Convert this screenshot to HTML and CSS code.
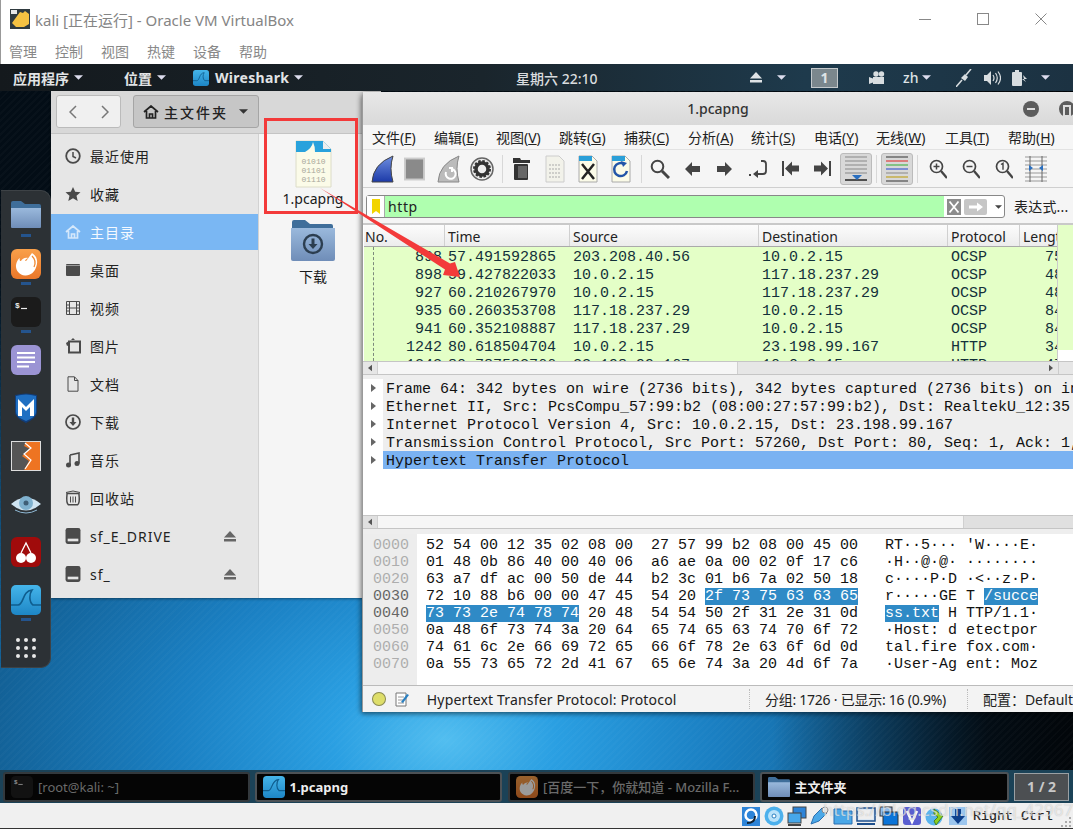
FILE: index.html
```html
<!DOCTYPE html>
<html lang="zh">
<head>
<meta charset="utf-8">
<title>kali [正在运行] - Oracle VM VirtualBox</title>
<link rel="stylesheet" href="styles.css">
</head>
<body>
<svg class="defs" width="0" height="0">
  <defs>
    <linearGradient id="gFolder" x1="0" y1="0" x2="0" y2="1"><stop offset="0" stop-color="#9ab9dc"/><stop offset="1" stop-color="#6f8db8"/></linearGradient>
    <linearGradient id="gShark" x1="0" y1="0" x2="0" y2="1"><stop offset="0" stop-color="#45b5ea"/><stop offset="1" stop-color="#1d86c6"/></linearGradient>
    <linearGradient id="gFox" x1="0" y1="0" x2="0" y2="1"><stop offset="0" stop-color="#f9a04a"/><stop offset="1" stop-color="#e9772a"/></linearGradient>
    <linearGradient id="gFin" x1="0" y1="0" x2="0" y2="1"><stop offset="0" stop-color="#6f8fe0"/><stop offset="1" stop-color="#1c3aa8"/></linearGradient>
    <symbol id="folder" viewBox="0 0 30 27"><path d="M0 2q0-2 2-2h8l4 3h14q2 0 2 2v5H0z" fill="#3f6e9a"/><path d="M0 7h30v19q0 1-1 1H1q-1 0-1-1z" fill="url(#gFolder)"/></symbol>
    <symbol id="shark" viewBox="0 0 30 30"><rect width="30" height="30" rx="5" fill="url(#gShark)"/><path d="M0 20h7c6 0 4-14 14-15-3 4-3 12 1 15h8" fill="none" stroke="#0f5d8e" stroke-width="1.6"/></symbol>
    <symbol id="fox" viewBox="0 0 30 30"><rect width="30" height="30" rx="6" fill="url(#gFox)"/><path d="M21 4c5 3 6 8 4.500 13C24 23 19 27 14 26.500 8 26 4.500 21 5 16c.5-3 2-6 4-7-1 2 0 3 1 3 1-2 4-4 7-3-2 1-3 2-3 3 3-1 7 1 7 5 0 5-6 7-9 4 3 .5 6-1 6-3 0-3-3-3-5-3" fill="#fff"/><path d="M21 7c3 3 4 7 2 11" fill="none" stroke="#f08a32" stroke-width="1.300"/></symbol>
    <symbol id="term" viewBox="0 0 30 30"><rect width="30" height="30" rx="6" fill="#1b1b1b"/><text x="4" y="11" font-family="Liberation Mono" font-weight="700" font-size="8" fill="#eee">$</text><path d="M10 11.500h6" stroke="#eee" stroke-width="1.200"/></symbol>
    <symbol id="eject" viewBox="0 0 12 11"><path d="M6 0l6 6.500H0z" fill="currentColor"/><rect y="8" width="12" height="2.500" fill="currentColor"/></symbol>
    <symbol id="tri" viewBox="0 0 10 5"><path d="M0 0h10L5 5z" fill="currentColor"/></symbol>
    <symbol id="home" viewBox="0 0 16 14"><path d="M1 7l7-6 7 6M3.500 6v7h9V6M6.500 13V9h3v4" fill="none" stroke="currentColor" stroke-width="1.700"/></symbol>
    <symbol id="disk" viewBox="0 0 14 15"><rect width="14" height="15" rx="2" fill="#4b4b4b"/><rect x="2" y="10" width="10" height="2.500" fill="#e6e6e6"/></symbol>
    <symbol id="down" viewBox="0 0 16 16"><circle cx="8" cy="8" r="7" fill="none" stroke="currentColor" stroke-width="1.700"/><path d="M6.800 3.500h2.400V8h2.300L8 12 4.500 8h2.300z" fill="currentColor"/></symbol>
  </defs>
</svg>

<div class="host">
  <header class="host-title">
    <svg class="vbox-logo" viewBox="0 0 20 20"><rect width="20" height="20" fill="#2f3a3f"/><path d="M2 14L10 3l3 1 2-2 4 3v10l-5 3H6z" fill="#f5c242"/><rect x="1" y="1" width="6" height="4" fill="#e8e8e8"/></svg>
    <span class="host-name">kali [正在运行] - Oracle VM VirtualBox</span>
    <div class="win-ctrls">
      <svg viewBox="0 0 12 12"><path d="M0 6.500h12" stroke="#888"/></svg>
      <svg viewBox="0 0 12 12"><rect x=".5" y=".5" width="11" height="11" fill="none" stroke="#888"/></svg>
      <svg viewBox="0 0 12 12"><path d="M.5.500l11 11M11.500.500l-11 11" stroke="#888"/></svg>
    </div>
  </header>
  <nav class="host-menu"><span>管理</span><span>控制</span><span>视图</span><span>热键</span><span>设备</span><span>帮助</span></nav>

  <main class="guest">
    <div class="panel">
      <div class="panel-left">
        <span class="pitem">应用程序<svg class="tri"><use href="#tri"/></svg></span>
        <span class="pitem">位置<svg class="tri"><use href="#tri"/></svg></span>
        <span class="pitem wsitem"><svg class="pico"><use href="#shark"/></svg>Wireshark<svg class="tri"><use href="#tri"/></svg></span>
      </div>
      <div class="clock">星期六 22:10</div>
      <div class="panel-right">
        <svg class="pe"><use href="#eject"/></svg>
        <svg class="tri t1"><use href="#tri"/></svg>
        <span class="wsnum">1</span>
        <svg class="cam" viewBox="0 0 16 14"><path d="M0 6l4 1.500V6h11v7H4v-1.500L0 13z" fill="#d8dde0"/><circle cx="7" cy="3" r="2.700" fill="#d8dde0"/><circle cx="12.500" cy="3" r="2.700" fill="#d8dde0"/></svg>
        <span class="zh">zh</span>
        <svg class="tri t2"><use href="#tri"/></svg>
        <svg class="plug" viewBox="0 0 16 18"><path d="M0 18l6-7" stroke="#d8dde0" stroke-width="1.500"/><path d="M5 9l4 3 3-4-3-3z" fill="#d8dde0"/><path d="M10 6l5-6" stroke="#d8dde0" stroke-width="1.500"/></svg>
        <svg class="vol" viewBox="0 0 17 14"><path d="M0 4h3l4-4v14l-4-4H0z" fill="#d8dde0"/><path d="M9 4q2 3 0 6M11.500 2q3.500 5 0 10M14 .5q5 6.500 0 13" stroke="#d8dde0" fill="none" stroke-width="1.200"/></svg>
        <svg class="batt" viewBox="0 0 16 16"><rect x="0" y="2" width="10" height="14" rx="1" fill="#d8dde0"/><rect x="3" y="0" width="4" height="2" fill="#d8dde0"/><path d="M11 5l4 4h-3l2 3-4-3h2z" fill="#d8dde0"/></svg>
        <svg class="tri t3"><use href="#tri"/></svg>
      </div>
    </div>

    <div class="desktop">
      <aside class="dock">
        <div class="dock-item"><svg class="dico"><use href="#folder"/></svg><i class="run"></i></div>
        <div class="dock-item"><svg class="dico"><use href="#fox"/></svg><i class="run"></i></div>
        <div class="dock-item"><svg class="dico"><use href="#term"/></svg><i class="run"></i></div>
        <div class="dock-item"><svg class="dico" viewBox="0 0 30 30"><rect width="30" height="30" rx="6" fill="#9b94d4"/><path d="M6 8h18M6 12.500h18M6 17h18M6 21.500h12" stroke="#fff" stroke-width="2"/></svg><i class="run off"></i></div>
        <div class="dock-item"><svg class="dico" viewBox="0 0 30 30"><path d="M4 2q11-3 22 0v17q0 6-11 11Q4 25 4 19z" fill="#123d78"/><path d="M5 3q10-3 20 0v16q0 5-10 9Q5 24 5 19z" fill="#1f6fc2"/><path d="M7 23V6l8 8 8-8v17h-4v-9l-4 4-4-4v9z" fill="#fff"/></svg><i class="run off"></i></div>
        <div class="dock-item"><svg class="dico" viewBox="0 0 30 30"><rect x=".5" y=".5" width="29" height="29" fill="#555" stroke="#ddd"/><path d="M15 1h14v28H13l5-9-7-5 8-7-6-3z" fill="#ee7422"/><path d="M14 2l6 5-7 6 7 6-6 9" fill="none" stroke="#fff" stroke-width="1.200"/></svg><i class="run off"></i></div>
        <div class="dock-item"><svg class="dico" viewBox="0 0 30 30"><path d="M0 15Q15 2 30 15 15 28 0 15z" fill="#cfe4f2"/><circle cx="15" cy="14" r="7" fill="#7fb1cf"/><circle cx="15" cy="14" r="2.500" fill="#3f5f77"/><path d="M4 21q11 6 22 0" stroke="#8fb8d4" fill="none"/></svg><i class="run off"></i></div>
        <div class="dock-item"><svg class="dico" viewBox="0 0 30 30"><rect width="30" height="30" rx="6" fill="#a00b0b"/><circle cx="10" cy="21" r="5" fill="#fff"/><circle cx="20" cy="21" r="5" fill="#fff"/><path d="M10 16l5-10 5 10" stroke="#fff" fill="none" stroke-width="1.300"/></svg><i class="run off"></i></div>
        <div class="dock-item"><svg class="dico"><use href="#shark"/></svg><i class="run"></i></div>
        <div class="dock-grid"><i></i><i></i><i></i><i></i><i></i><i></i><i></i><i></i><i></i></div>
      </aside>

      <section class="files">
        <div class="files-head">
          <div class="nav-btns">
            <svg viewBox="0 0 8 14"><path d="M7 1L1 7l6 6" fill="none" stroke="#777" stroke-width="1.500"/></svg>
            <svg viewBox="0 0 8 14"><path d="M1 1l6 6-6 6" fill="none" stroke="#777" stroke-width="1.500"/></svg>
          </div>
          <div class="path-btn"><svg class="ph"><use href="#home"/></svg><b>主文件夹</b><svg class="tri pt"><use href="#tri"/></svg></div>
        </div>
        <div class="files-body">
          <ul class="side">
            <li><svg class="sico" viewBox="0 0 16 16"><circle cx="8" cy="8" r="6.800" fill="none" stroke="currentColor" stroke-width="1.800"/><path d="M8 4v4.500l3 1.500" fill="none" stroke="currentColor" stroke-width="1.500"/></svg>最近使用</li>
            <li><svg class="sico" viewBox="0 0 16 16"><path d="M8 1l2.200 4.800 5.300.5-4 3.500 1.200 5.200L8 12.200 3.300 15l1.200-5.200-4-3.500 5.300-.5z" fill="currentColor"/></svg>收藏</li>
            <li class="sel"><svg class="sico"><use href="#home"/></svg>主目录</li>
            <li><svg class="sico" viewBox="0 0 16 16"><rect x="1" y="2" width="14" height="12" rx="1" fill="currentColor"/><rect x="1" y="3" width="14" height="1" fill="#999"/></svg>桌面</li>
            <li><svg class="sico" viewBox="0 0 16 16"><path d="M1.500 1.500h13v13h-13zM4.500 1.500v13M11.500 1.500v13M1.500 5h3M1.500 8h3M1.500 11h3M11.500 5h3M11.500 8h3M11.500 11h3M4.500 8h7" fill="none" stroke="currentColor"/></svg>视频</li>
            <li><svg class="sico" viewBox="0 0 16 16"><rect x="4" y="3.500" width="11" height="11" fill="none" stroke="currentColor" stroke-width="2"/><path d="M1 5l3-2v4l-2 1zM6 2l2-2 2 2z" fill="currentColor"/></svg>图片</li>
            <li><svg class="sico" viewBox="0 0 16 16"><path d="M3 .8h6.500L13 4.500v10.700H3z" fill="none" stroke="currentColor"/><path d="M9.500 1v3.500H13" fill="none" stroke="currentColor"/></svg>文档</li>
            <li><svg class="sico"><use href="#down"/></svg>下载</li>
            <li><svg class="sico" viewBox="0 0 16 16"><path d="M5 3l9-2v10.500M5 3v10" fill="none" stroke="currentColor" stroke-width="1.600"/><circle cx="3.500" cy="13" r="2.500" fill="currentColor"/><circle cx="12" cy="11.500" r="2.500" fill="currentColor"/></svg>音乐</li>
            <li><svg class="sico" viewBox="0 0 16 16"><path d="M2 3.500h12v.8q1 9-1.500 10.500h-9Q1 13 2 4.300z" fill="none" stroke="currentColor" stroke-width="1.500"/><path d="M1 2.500q7-3 14 0M5.500 6.500v6M8 6.500v6M10.500 6.500v6" fill="none" stroke="currentColor"/></svg>回收站</li>
            <li><svg class="sico"><use href="#disk"/></svg>sf_E_DRIVE<svg class="ej"><use href="#eject"/></svg></li>
            <li><svg class="sico"><use href="#disk"/></svg>sf_<svg class="ej"><use href="#eject"/></svg></li>
          </ul>
          <div class="icons">
            <div class="fitem">
              <svg class="pcap" viewBox="0 0 37 48"><path d="M1 1h27l8 8v38H1z" fill="#fbfbe8" stroke="#dcdcc8"/><path d="M1 1h27l8 8v3H1z" fill="#29a2dc"/><path d="M10 12q7-4 8-10 2 4 2 10z" fill="#fbfbe8"/><path d="M28 1v8h8z" fill="#eee"/><text class="bin" x="18.500" y="24">01010</text><text class="bin" x="18.500" y="33">01101</text><text class="bin" x="18.500" y="42">01110</text></svg>
              <span>1.pcapng</span>
            </div>
            <div class="fitem dl">
              <svg class="bigfolder" viewBox="0 0 44 41"><path d="M1 2q0-2 2-2h11l5 4h21q2 0 2 2v8H1z" fill="#3f6e9a"/><path d="M0 8h44v31q0 2-2 2H2q-2 0-2-2z" fill="url(#gFolder)"/><circle cx="22" cy="24" r="9" fill="none" stroke="#2c3e50" stroke-width="2.400"/><path d="M20.500 18.500h3V24h3L22 29l-4.500-5h3z" fill="#2c3e50"/></svg>
              <span>下载</span>
            </div>
          </div>
        </div>
      </section>

      <section class="ws">
        <div class="ws-title">
          <b>1.pcapng</b>
          <i class="wbtn wmin"></i>
          <i class="wbtn wmax"></i>
        </div>
        <nav class="ws-menu"><span>文件(<u>F</u>)</span><span>编辑(<u>E</u>)</span><span>视图(<u>V</u>)</span><span>跳转(<u>G</u>)</span><span>捕获(<u>C</u>)</span><span>分析(<u>A</u>)</span><span>统计(<u>S</u>)</span><span>电话(<u>Y</u>)</span><span>无线(<u>W</u>)</span><span>工具(<u>T</u>)</span><span>帮助(<u>H</u>)</span></nav>
        <div class="ws-tools">
          <svg class="t w23" viewBox="0 0 23 28"><path d="M1 27Q2 9 22 1q-4 12 0 26z" fill="url(#gFin)" stroke="#444"/></svg>
          <svg class="t w22" viewBox="0 0 22 24"><rect x="1" y="1" width="20" height="22" fill="#8a8a8a" stroke="#ccc" stroke-width="2"/></svg>
          <svg class="t w23" viewBox="0 0 23 28"><path d="M1 27Q2 9 22 1q-4 12 0 26z" fill="#bbb" stroke="#888"/><path d="M9 17a5 5 0 1 0 6-3M15 17v-4h-3" fill="none" stroke="#fff" stroke-width="2"/></svg>
          <svg class="t w24" viewBox="0 0 24 24"><circle cx="12" cy="12" r="11" fill="#eee" stroke="#666" stroke-width="1.500"/><circle cx="12" cy="12" r="6" fill="none" stroke="#333" stroke-width="3.500"/><circle cx="12" cy="12" r="8" fill="none" stroke="#333" stroke-width="2" stroke-dasharray="2.500 1.700"/></svg>
          <i class="tsep"></i>
          <svg class="t w20" viewBox="0 0 20 24"><path d="M1 1h7l1 2h9v3H1z" fill="#333"/><rect x="2" y="7" width="14" height="16" rx="1" fill="#333"/><rect x="6" y="9" width="9" height="12" fill="#666"/></svg>
          <svg class="t w20 file" viewBox="0 0 20 28"><path d="M1 1h13l5 5v21H1z" fill="#f2f2ea" stroke="#ccc"/><path d="M4 10h12M4 14h12M4 18h12M4 22h12" stroke="#aaa" stroke-dasharray="2 1"/></svg>
          <svg class="t w20 file" viewBox="0 0 20 28"><path d="M1 1h13l5 5v21H1z" fill="#fbfbe8" stroke="#aaa"/><path d="M1 1h13v5H1z" fill="#2a9fd8"/><path d="M4 9l12 15M16 9L4 24" stroke="#222" stroke-width="2.500"/></svg>
          <svg class="t w20 file" viewBox="0 0 20 28"><path d="M1 1h13l5 5v21H1z" fill="#fbfbe8" stroke="#aaa"/><path d="M1 1h13v5H1z" fill="#2a9fd8"/><path d="M13 9a6.500 6.500 0 1 0 3 7" fill="none" stroke="#2255a8" stroke-width="2.500"/><path d="M10 6l6 2-4 4z" fill="#2255a8"/></svg>
          <i class="tsep s2"></i>
          <svg class="t w20" viewBox="0 0 20 20"><circle cx="7.500" cy="7.500" r="5.800" fill="none" stroke="#444" stroke-width="2"/><path d="M12 12l7 7" stroke="#444" stroke-width="3"/></svg>
          <svg class="t w15 m1" viewBox="0 0 15 14"><path d="M0 7l7-7v4h8v6H7v4z" fill="#444"/></svg>
          <svg class="t w15 m2" viewBox="0 0 15 14"><path d="M15 7L8 0v4H0v6h8v4z" fill="#444"/></svg>
          <svg class="t w18 m3" viewBox="0 0 18 18"><path d="M0 15h2M12 1h2q3 0 3 3v7q0 3-3 3H7" fill="none" stroke="#444" stroke-width="1.800"/><path d="M4 14l5-4v8z" fill="#444"/></svg>
          <svg class="t w17 m4" viewBox="0 0 17 15"><path d="M1 0v15" stroke="#444" stroke-width="2"/><path d="M3 7.500l7-7v4h7v6h-7v4z" fill="#444"/></svg>
          <svg class="t w17 m5" viewBox="0 0 17 15"><path d="M16 0v15" stroke="#444" stroke-width="2"/><path d="M14 7.500l-7-7v4H0v6h7v4z" fill="#444"/></svg>
          <span class="tog t-a"><svg viewBox="0 0 22 26"><path d="M0 1h22M0 5h22M0 9h22M0 13h22M0 17h22" stroke="#888"/><path d="M0 24h22" stroke="#222" stroke-width="1.500"/><path d="M7 19h10l-5 5z" fill="#2a6fc0"/></svg></span>
          <i class="tsep s3"></i>
          <span class="tog t-b"><svg viewBox="0 0 22 26"><path d="M0 1h22" stroke="#333"/><path d="M0 5h22" stroke="#d22"/><path d="M0 9h22" stroke="#3a3"/><path d="M0 13h22" stroke="#24c"/><path d="M0 17h22" stroke="#888"/><path d="M0 21h22" stroke="#b90"/><path d="M0 25h22" stroke="#333"/></svg></span>
          <i class="tsep s4"></i>
          <svg class="t w17 z1" viewBox="0 0 18 20"><circle cx="7.500" cy="7.500" r="6" fill="none" stroke="#444" stroke-width="1.700"/><path d="M12 12l6 7" stroke="#444" stroke-width="2.400"/><path d="M4.500 7.500h6M7.500 4.500v6" stroke="#444" stroke-width="1.500"/></svg>
          <svg class="t w17 z2" viewBox="0 0 18 20"><circle cx="7.500" cy="7.500" r="6" fill="none" stroke="#444" stroke-width="1.700"/><path d="M12 12l6 7" stroke="#444" stroke-width="2.400"/><path d="M4.500 7.500h6" stroke="#444" stroke-width="1.500"/></svg>
          <svg class="t w17 z3" viewBox="0 0 18 20"><circle cx="7.500" cy="7.500" r="6" fill="none" stroke="#444" stroke-width="1.700"/><path d="M12 12l6 7" stroke="#444" stroke-width="2.400"/><path d="M6 5.500l2-1.200v6.500" fill="none" stroke="#444" stroke-width="1.400"/></svg>
          <svg class="t w22 z4" viewBox="0 0 22 26"><path d="M0 1h22M0 5h22M0 9h22M0 13h22M0 17h22M0 21h22M0 25h22" stroke="#999"/><path d="M5 0v26M17 0v26" stroke="#666"/><path d="M4 9l4 3-4 3zM18 9l-4 3 4 3z" fill="#2a6fc0"/></svg>
        </div>
        <div class="filter-row">
          <div class="filter">
            <span class="bm"><svg viewBox="0 0 8 15"><path d="M0 0h8v15l-4-3-4 3z" fill="#f2d400"/></svg></span>
            <span class="ftext">http</span>
            <span class="fx"><svg viewBox="0 0 14 16"><rect width="14" height="16" fill="#8c8c8c"/><path d="M2.500 2.500l9 11M11.500 2.500l-9 11" stroke="#fff" stroke-width="1.800"/></svg></span>
            <span class="fgo"><svg viewBox="0 0 23 16"><rect width="23" height="16" rx="2" fill="#c6c6c6"/><path d="M5 6.500h8V3.500l6 4.500-6 4.500v-3H5z" fill="#fff"/></svg></span>
            <svg class="tri fdrop"><use href="#tri"/></svg>
          </div>
          <span class="expr">表达式...</span>
        </div>

        <div class="plist">
          <div class="plist-main">
            <div class="phead pgrid"><span>No.</span><span>Time</span><span>Source</span><span>Destination</span><span>Protocol</span><span>Length</span></div>
            <div class="prows">
              <div class="prow pgrid"><span>898</span><span>57.491592865</span><span>203.208.40.56</span><span>10.0.2.15</span><span>OCSP</span><span>754</span></div>
              <div class="prow pgrid"><span>898</span><span>59.427822033</span><span>10.0.2.15</span><span>117.18.237.29</span><span>OCSP</span><span>487</span></div>
              <div class="prow pgrid"><span>927</span><span>60.210267970</span><span>10.0.2.15</span><span>117.18.237.29</span><span>OCSP</span><span>487</span></div>
              <div class="prow pgrid"><span>935</span><span>60.260353708</span><span>117.18.237.29</span><span>10.0.2.15</span><span>OCSP</span><span>844</span></div>
              <div class="prow pgrid"><span>941</span><span>60.352108887</span><span>117.18.237.29</span><span>10.0.2.15</span><span>OCSP</span><span>844</span></div>
              <div class="prow pgrid"><span>1242</span><span>80.618504704</span><span>10.0.2.15</span><span>23.198.99.167</span><span>HTTP</span><span>342</span></div>
              <div class="prow pgrid"><span>1243</span><span>80.787582766</span><span>23.198.99.167</span><span>10.0.2.15</span><span>HTTP</span><span>474</span></div>
            </div>
            <i class="dash"></i>
          </div>
          <div class="vbar"><i></i></div>
        </div>
        <div class="hbar hb1"><svg class="ar" viewBox="0 0 5 8"><path d="M5 0v8L0 4z" fill="#555"/></svg><i class="thumb"></i><i class="rest"></i><svg class="ar" viewBox="0 0 5 8"><path d="M0 0v8l5-4z" fill="#555"/></svg><i class="end"></i></div>
        <div class="split s-a"></div>
        <div class="details">
          <div class="drow"><svg class="ar" viewBox="0 0 5 8"><path d="M0 0v8l5-4z" fill="#666"/></svg><span>Frame 64: 342 bytes on wire (2736 bits), 342 bytes captured (2736 bits) on interface 0</span></div>
          <div class="drow"><svg class="ar" viewBox="0 0 5 8"><path d="M0 0v8l5-4z" fill="#666"/></svg><span>Ethernet II, Src: PcsCompu_57:99:b2 (08:00:27:57:99:b2), Dst: RealtekU_12:35:02</span></div>
          <div class="drow"><svg class="ar" viewBox="0 0 5 8"><path d="M0 0v8l5-4z" fill="#666"/></svg><span>Internet Protocol Version 4, Src: 10.0.2.15, Dst: 23.198.99.167</span></div>
          <div class="drow"><svg class="ar" viewBox="0 0 5 8"><path d="M0 0v8l5-4z" fill="#666"/></svg><span>Transmission Control Protocol, Src Port: 57260, Dst Port: 80, Seq: 1, Ack: 1, Len: 288</span></div>
          <div class="drow cur"><svg class="ar" viewBox="0 0 5 8"><path d="M0 0v8l5-4z" fill="#666"/></svg><span>Hypertext Transfer Protocol</span></div>
        </div>
        <div class="hbar hb2"><svg class="ar" viewBox="0 0 5 8"><path d="M5 0v8L0 4z" fill="#555"/></svg><i class="thumb"></i><i class="rest"></i></div>
        <div class="split"></div>
        <div class="hex">
          <div class="hrow"><span class="off">0000</span><span class="hx">52 54 00 12 35 02 08 00  27 57 99 b2 08 00 45 00</span><span class="asc">RT··5··· 'W····E·</span></div>
          <div class="hrow"><span class="off">0010</span><span class="hx">01 48 0b 86 40 00 40 06  a6 ae 0a 00 02 0f 17 c6</span><span class="asc">·H··@·@· ········</span></div>
          <div class="hrow"><span class="off">0020</span><span class="hx">63 a7 df ac 00 50 de 44  b2 3c 01 b6 7a 02 50 18</span><span class="asc">c····P·D ·&lt;··z·P·</span></div>
          <div class="hrow"><span class="off on">0030</span><span class="hx">72 10 88 b6 00 00 47 45  54 20 <mark>2f 73 75 63 63 65</mark></span><span class="asc">r·····GE T <mark>/succe</mark></span></div>
          <div class="hrow"><span class="off on">0040</span><span class="hx"><mark>73 73 2e 74 78 74</mark> 20 48  54 54 50 2f 31 2e 31 0d</span><span class="asc"><mark>ss.txt</mark> H TTP/1.1·</span></div>
          <div class="hrow"><span class="off">0050</span><span class="hx">0a 48 6f 73 74 3a 20 64  65 74 65 63 74 70 6f 72</span><span class="asc">·Host: d etectpor</span></div>
          <div class="hrow"><span class="off">0060</span><span class="hx">74 61 6c 2e 66 69 72 65  66 6f 78 2e 63 6f 6d 0d</span><span class="asc">tal.fire fox.com·</span></div>
          <div class="hrow"><span class="off">0070</span><span class="hx">0a 55 73 65 72 2d 41 67  65 6e 74 3a 20 4d 6f 7a</span><span class="asc">·User-Ag ent: Moz</span></div>
        </div>
        <footer class="ws-status">
          <i class="led"></i>
          <svg class="note" viewBox="0 0 14 15"><path d="M1 1h10v13H1z" fill="#fff" stroke="#777"/><path d="M3 5h6M3 8h6M3 11h6" stroke="#999"/><path d="M6 10l6-8 2 1-6 8z" fill="#2a7fc0"/></svg>
          <span class="st1">Hypertext Transfer Protocol: Protocol</span>
          <span class="st2">分组: 1726 · 已显示: 16 (0.9%)</span>
          <span class="st3">配置：Default</span>
        </footer>
      </section>
    </div>

    <div class="taskbar">
      <div class="tb dim"><svg class="tbi"><use href="#term"/></svg><span>[root@kali: ~]</span></div>
      <div class="tb act"><svg class="tbi"><use href="#shark"/></svg><span>1.pcapng</span></div>
      <div class="tb dim3"><svg class="tbi"><use href="#fox"/></svg><span>[百度一下，你就知道 - Mozilla F...</span></div>
      <div class="tb act2"><svg class="tbi"><use href="#folder"/></svg><span>主文件夹</span></div>
      <div class="pager">1 / 2</div>
    </div>
  </main>

  <footer class="host-status">
    <svg class="vi" viewBox="0 0 20 20"><rect x="1" y="1" width="18" height="19" fill="#2d84d8"/><circle cx="10" cy="9" r="5.500" fill="none" stroke="#fff" stroke-width="2.500"/><path d="M6 17q8 0 8-7" stroke="#123" fill="none" stroke-width="2"/></svg>
    <svg class="vi" viewBox="0 0 20 20"><circle cx="10" cy="10" r="9.500" fill="#4cb0ec"/><circle cx="10" cy="10" r="6" fill="#b9e2fa"/><circle cx="10" cy="10" r="2" fill="#fff" stroke="#2a7fc0"/></svg>
    <svg class="vi" viewBox="0 0 20 20"><rect x="6" y="1" width="13" height="11" fill="#2d84d8" stroke="#444"/><rect x="1" y="7" width="13" height="10" fill="#46a7ea" stroke="#444"/><path d="M1 19h13" stroke="#444" stroke-width="2"/></svg>
    <svg class="vi" viewBox="0 0 20 20"><path d="M1 18l3-8 8-8 5 5-8 8z" fill="#4aa8e8" stroke="#2a6fb0"/><circle cx="15" cy="4" r="3" fill="#eee" stroke="#888"/></svg>
    <svg class="vi" viewBox="0 0 20 20"><path d="M1 3h7l1 2h10v13H1z" fill="#4aa8e8" stroke="#2a6fb0"/></svg>
    <svg class="vi" viewBox="0 0 20 20"><rect x="1" y="2" width="18" height="13" fill="#dbe7f3" stroke="#1e4f8c" stroke-width="1.500"/><rect x="3" y="4" width="14" height="9" fill="#eee"/><path d="M1 18h18" stroke="#1e4f8c" stroke-width="2"/></svg>
    <svg class="vi" viewBox="0 0 20 20"><rect x="1" y="1" width="12" height="9" fill="#8fbcec" stroke="#333"/><rect x="4" y="6" width="15" height="13" fill="#0b74d8" stroke="#333"/></svg>
    <svg class="vi" viewBox="0 0 20 20"><rect x="1" y="1" width="18" height="18" rx="3" fill="#5a5fd0"/><path d="M5 5l5 11 5-11" stroke="#fff" fill="none" stroke-width="2.500"/></svg>
    <svg class="vi" viewBox="0 0 20 20"><circle cx="9" cy="11" r="8.500" fill="#5ab4ee"/><path d="M9 3l9 7-7 9-2-4 4-4-4-3z" fill="#8cd020" stroke="#3a7010" stroke-width=".8"/></svg>
    <svg class="vi" viewBox="0 0 20 20"><rect x="1" y="1" width="18" height="18" fill="#9cc6ee"/><path d="M7 3h6v7h4l-7 8-7-8h4z" fill="#0e3f8c"/></svg>
    <span class="rctrl">Right Ctrl</span>
    <svg class="grip" viewBox="0 0 12 12"><path d="M9 1h2v2H9zM5 5h2v2H5zM9 5h2v2H9zM1 9h2v2H1zM5 9h2v2H5zM9 9h2v2H9z" fill="#aaa"/></svg>
  </footer>

  <svg class="annot" viewBox="0 0 1073 829">
    <rect x="265.500" y="119.500" width="91" height="93" fill="none" stroke="#f33a3a" stroke-width="3"/>
    <path d="M320 188L450 263.500 455 262 460 277 443 275 445 269.500z" fill="#f33a3a"/>
  </svg>
  <span class="mark-text">https://blog.csdn.net/qq_42967398</span>
</div>
</body>
</html>
```

FILE: styles.css
```css
* { box-sizing: border-box; }
html, body { margin: 0; padding: 0; }
body { width: 1073px; height: 829px; overflow: hidden; background: #fff; font-family: "Noto Sans", "Noto Sans CJK SC", sans-serif; font-size: 14px; color: #222; }
.defs { position: absolute; }
svg { display: block; flex: none; }
i { display: block; font-style: normal; }
ul { list-style: none; margin: 0; padding: 0; }

.host { position: relative; width: 1073px; height: 829px; display: flex; flex-direction: column; background: #fff; border-left: 1px solid #999; }
.host-title { height: 38px; flex: none; display: flex; align-items: center; padding-left: 9px; }
.vbox-logo { width: 20px; height: 20px; }
.host-name { margin-left: 5px; font-size: 15px; color: #858585; }
.win-ctrls { margin-left: auto; display: flex; gap: 46px; padding-right: 26px; }
.win-ctrls svg { width: 12px; height: 12px; }
.host-menu { height: 26px; flex: none; display: flex; gap: 18px; padding-left: 8px; color: #888; align-items: center; }

.guest { flex: 1; min-height: 0; display: flex; flex-direction: column; margin-left: -1px; background: #173c50; }
.panel { height: 27px; flex: none; position: relative; display: flex; align-items: center; background: linear-gradient(90deg, #14191d 0, #1a252c 45%, #1e3a4c 75%, #1c3242 100%); color: #e4e4e4; }
.panel-left { display: flex; align-items: center; padding-left: 13px; font-weight: 700; }
.pitem { display: flex; align-items: center; color: #e2e4e6; }
.pitem:nth-child(1) { width: 111px; }
.pitem:nth-child(2) { width: 69px; }
.wsitem { letter-spacing: .3px; }
.tri { width: 9px; height: 5px; margin-left: 5px; color: #dde; }
.pico { width: 16px; height: 16px; margin-right: 6px; }
.clock { position: absolute; left: 516px; font-weight: 500; font-size: 14px; color: #d9dcdf; }
.panel-right { position: absolute; left: 0; top: 0; right: 0; height: 27px; display: flex; align-items: center; padding-left: 750px; color: #dfe3e6; }
.pe { width: 12px; height: 11px; }
.t1 { margin-left: 15px; }
.wsnum { margin-left: 25px; width: 27px; height: 20px; border: 1px solid #c4c9cc; background: #7b878d; color: #dfe3e6; text-align: center; line-height: 18px; font-weight: 700; }
.cam { margin-left: 31px; width: 16px; height: 14px; }
.zh { margin-left: 18px; font-size: 14px; font-weight: 500; }
.t2 { margin-left: 4px; }
.plug { margin-left: 25px; width: 16px; height: 18px; }
.vol { margin-left: 12px; width: 17px; height: 14px; }
.batt { margin-left: 11px; width: 16px; height: 16px; }
.t3 { margin-left: 13px; }

.desktop { flex: 1; min-height: 0; position: relative; overflow: hidden; background:
  repeating-linear-gradient(135deg, rgba(255,255,255,.02) 0 2px, transparent 2px 5px),
  linear-gradient(90deg, transparent 72%, rgba(2,6,10,.9) 92%, #02060a 100%),
  radial-gradient(ellipse 800px 560px at 445px 649px, #52bef0 0, #2a9fe2 14%, #1a7fc2 34%, #125f94 58%, #0b3c5e 78%, #030d16 100%); }

.dock { position: absolute; left: 1px; top: 99px; width: 50px; height: 478px; background: #2c3135; border: 1px solid #3d4246; border-left: 0; border-radius: 0 10px 10px 0; display: flex; flex-direction: column; align-items: center; padding-top: 10px; padding-left: 1px; z-index: 3; }
.dock-item { width: 30px; height: 48px; display: flex; flex-direction: column; align-items: center; flex: none; }
.dico { width: 30px; height: 30px; }
.dock-item:first-child .dico { height: 27px; margin-bottom: 3px; }
.run { width: 10px; height: 3px; margin-top: 3px; background: #24548e; }
.run.off { background: transparent; }
.dock-grid { margin-top: 5px; display: grid; grid-template-columns: repeat(3, 4px); gap: 4px; }
.dock-grid i { width: 4px; height: 4px; border-radius: 50%; background: #e8e8e8; }

.files { position: absolute; left: 51px; top: 0; width: 330px; height: 507px; background: #f5f5f5; display: flex; flex-direction: column; border-radius: 6px 0 0 0; z-index: 1; box-shadow: 0 1px 3px rgba(0,0,0,.4); }
.files-head { height: 43px; flex: none; display: flex; align-items: center; gap: 12px; padding-left: 5px; padding-bottom: 1px; background: #d8d8d8; border-bottom: 1px solid #c4c4c4; }
.nav-btns { width: 65px; height: 33px; display: flex; align-items: center; gap: 24px; justify-content: center; background: #f0f0f0; border: 1px solid #bbb; border-radius: 3px; }
.nav-btns svg { width: 8px; height: 14px; }
.path-btn { width: 126px; height: 33px; display: flex; align-items: center; padding-left: 9px; background: #c6c6c6; border: 1px solid #a5a5a5; border-radius: 3px; color: #222; }
.path-btn b { font-weight: 500; letter-spacing: 2px; margin-left: 5px; }
.ph { width: 16px; height: 14px; }
.pt { margin-left: 11px; color: #333; }
.files-body { flex: 1; display: flex; min-height: 0; }
.side { width: 208px; flex: none; background: #e6e6e6; border-right: 1px solid #d2d2d2; padding-top: 3px; }
.side li { height: 38px; display: flex; align-items: center; padding-left: 14px; color: #222; letter-spacing: 1px; }
.side li.sel { height: 36px; margin: 1px 0; background: #7ab7f3; color: #f4f9ff; }
.sico { width: 16px; height: 16px; margin-right: 9px; color: #4a4a4a; }
.sel .sico { color: #d5e8fb; width: 16px; height: 14px; }
.ej { width: 12px; height: 11px; margin-left: auto; margin-right: 22px; color: #666; }
.icons { flex: 1; display: flex; flex-direction: column; padding-left: 23px; padding-top: 6px; }
.fitem { width: 62px; display: flex; flex-direction: column; align-items: center; color: #1a1a1a; }
.pcap { width: 37px; height: 48px; }
.fitem span { margin-top: 1px; font-size: 14px; white-space: nowrap; }
.bin { font-family: "Liberation Mono", monospace; font-size: 8px; fill: #a7a79a; text-anchor: middle; }
.dl { margin-top: 12px; }
.bigfolder { width: 44px; height: 41px; }
.dl span { margin-top: 5px; }

.ws { position: absolute; left: 362px; top: 1px; width: 711px; height: 620px; background: #f5f5f5; display: flex; flex-direction: column; z-index: 2; border-radius: 6px 6px 0 0; border-left: 1px solid #9a9a9a; box-shadow: -2px 0 5px rgba(0,0,0,.25), 0 2px 5px rgba(0,0,0,.4); }
.ws-title { height: 33px; flex: none; display: flex; justify-content: center; align-items: center; position: relative; background: linear-gradient(#e8e8e8, #d9d9d9); }
.ws-title b { font-weight: 500; color: #333; }
.wbtn { position: absolute; top: 9px; width: 16px; height: 16px; border-radius: 50%; background: #5c5c5c; }
.wmin { left: 660px; }
.wmin::after { content: ""; display: block; margin: 7px 4px; height: 2px; background: #ddd; }
.wmax { left: 696px; }
.wmax::after { content: ""; display: block; margin: 4px; height: 8px; border: 2px solid #ddd; }
.ws-menu { height: 24px; flex: none; display: flex; align-items: center; padding-left: 9px; color: #222; background: #f6f6f6; }
.ws-menu span { white-space: nowrap; }
.ws-menu span:nth-child(1) { width: 62px; }
.ws-menu span:nth-child(2) { width: 62px; }
.ws-menu span:nth-child(3) { width: 63px; }
.ws-menu span:nth-child(4) { width: 65px; }
.ws-menu span:nth-child(5) { width: 64px; }
.ws-menu span:nth-child(6) { width: 63px; }
.ws-menu span:nth-child(7) { width: 63px; }
.ws-menu span:nth-child(8) { width: 62px; }
.ws-menu span:nth-child(9) { width: 69px; }
.ws-menu span:nth-child(10) { width: 63px; }
.ws-tools { height: 39px; flex: none; display: flex; align-items: center; padding-left: 8px; background: #f5f5f5; border-top: 1px solid #e2e2e2; border-bottom: 1px solid #cfcfcf; }
.t { margin-right: 10px; }
.w23 { width: 23px; height: 28px; }
.w22 { width: 21px; height: 24px; margin-right: 12px; }
.w24 { width: 24px; height: 24px; margin-right: 8px; }
.w20 { width: 20px; height: 24px; margin-right: 13px; }
.file { height: 28px; }
.tsep { width: 1px; height: 28px; background: #d8d8d8; margin-right: 9px; }
.s2 { margin-right: 8px; margin-left: -3px; }
.w15 { width: 15px; height: 14px; }
.m1 { margin-left: 2px; margin-right: 17px; }
.m2 { margin-right: 17px; }
.w18 { width: 18px; height: 18px; margin-right: 15px; }
.w17 { width: 17px; height: 15px; }
.m4 { margin-right: 15px; }
.m5 { margin-right: 9px; }
.tog { width: 32px; height: 32px; border: 1px solid #bbb; border-radius: 3px; background: #d8d8d8; display: flex; align-items: center; justify-content: center; }
.tog svg { width: 22px; height: 26px; }
.s3 { margin: 0 4px; }
.s4 { margin: 0 11px 0 4px; }
.z1, .z2, .z3 { width: 18px; height: 20px; margin-right: 15px; }
.z3 { margin-right: 12px; }
.z4 { width: 22px; height: 26px; margin: 0; }

.filter-row { height: 37px; flex: none; display: flex; align-items: flex-start; padding: 7px 0 0 3px; border-bottom: 2px solid #c9c9c9; }
.filter { width: 639px; height: 23px; display: flex; align-items: center; background: #fff; border: 1px solid #888; border-radius: 3px; }
.bm { width: 18px; height: 21px; flex: none; display: flex; align-items: center; justify-content: center; border-right: 1px solid #aaa; background: #fff; }
.bm svg { width: 8px; height: 15px; }
.ftext { width: 559px; height: 21px; flex: none; padding-left: 3px; background: #afffaf; line-height: 21px; font-size: 14px; letter-spacing: .6px; }
.fx { margin-left: 3px; }
.fx svg { width: 14px; height: 16px; }
.fgo { margin-left: 3px; }
.fgo svg { width: 23px; height: 16px; }
.fdrop { width: 7px; height: 4px; margin-left: 8px; color: #444; }
.expr { margin-left: 9px; font-size: 14px; line-height: 23px; white-space: nowrap; letter-spacing: .2px; }

.plist { height: 136px; flex: none; display: flex; background: #fff; border-left: 1px solid #fff; overflow: hidden; }
.plist-main { width: 693px; position: relative; }
.pgrid { display: grid; grid-template-columns: 81px 125px 189px 189px 72px 37px; }
.phead { height: 22px; background: linear-gradient(#fcfcfc, #ececec); border-bottom: 1px solid #aaa; font-size: 14px; color: #222; line-height: 23px; }
.phead span { padding-left: 3px; border-right: 1px solid #d0d0d0; overflow: hidden; white-space: nowrap; }
.phead span:first-child { padding-left: 1px; }
.phead span:last-child { border: 0; }
.prows { height: 114px; overflow: hidden; background: #e4ffc7; }
.prow { height: 18px; font: 15px/22px "Liberation Mono", monospace; color: #13303a; }
.prow span { height: 18px; padding-left: 3px; white-space: nowrap; overflow: hidden; }
.prow span:first-child { text-align: right; padding: 0 3px 0 0; }
.prow span:last-child { padding-left: 25px; }
.dash { position: absolute; left: 9px; top: 22px; height: 114px; border-left: 1px dashed #7c8a7c; }
.vbar { flex: 1; background: linear-gradient(#e4ffc7 0 92%, #fff 92%); border-left: 1px solid #ccc; }

.hbar { height: 14px; flex: none; display: flex; align-items: stretch; background: #e6e6e6; border-top: 1px solid #c5c5c5; border-bottom: 1px solid #c5c5c5; }
.hbar .ar { width: 4px; height: 8px; margin: 2px 5px 0; }
.hbar i.thumb { width: 361px; background: #f6f6f6; border: 1px solid #d0d0d0; border-width: 0 1px; }
.hb1 .rest { width: 306px; }
.hb1 .end { flex: 1; border-left: 1px solid #ccc; }
.hb2 { background: #e0e0e0; }
.hb2 i.thumb { width: 587px; }
.split { height: 5px; flex: none; background: #eee; }
.split.s-a { height: 4px; }
.details { height: 136px; flex: none; background: #fff; overflow: hidden; }
.drow { height: 18px; display: flex; align-items: center; font: 15px/22px "Liberation Mono", monospace; color: #111; white-space: nowrap; }
.drow .ar { width: 5px; height: 8px; margin-left: 8px; margin-right: 7px; }
.drow span { flex: 1; background: #eee; padding-left: 3px; height: 18px; overflow: hidden; }
.drow.cur span { background: #7ab2f2; }

.hex { height: 152px; flex: none; background: linear-gradient(90deg, #ededed 54px, #fff 54px); font: 15px/17px "Liberation Mono", monospace; color: #111; padding-top: 3px; border-bottom: 1px solid #bbb; }
.hrow { height: 17px; display: flex; white-space: pre; }
.hrow .off { width: 63px; padding-left: 10px; color: #adadad; flex: none; }
.hrow .off.on { color: #666; }
.hx { width: 459px; flex: none; }
mark { background: #2f8ac6; color: #fff; }
.ws-status { height: 26px; flex: none; display: flex; align-items: center; font-size: 14px; color: #222; background: #f3f3f3; white-space: nowrap; overflow: hidden; }
.led { width: 14px; height: 14px; margin-left: 9px; border-radius: 50%; background: #dede6a; border: 1px solid #8a8a50; }
.note { width: 14px; height: 15px; margin-left: 9px; }
.st1 { margin-left: 18px; width: 327px; letter-spacing: .17px; }
.st2 { width: 221px; padding-left: 15px; border-left: 1px dotted #bbb; letter-spacing: -.25px; }
.st3 { padding-left: 15px; border-left: 1px dotted #bbb; }

.taskbar { height: 33px; flex: none; display: flex; align-items: center; padding: 0 4px 0 3px; background: #1b4257; }
.tb { height: 30px; width: 247px; margin-right: 5px; display: flex; align-items: center; background: #050505; border: 2px solid #33393d; border-radius: 3px; padding-left: 6px; font-weight: 500; color: #6a6a6a; font-size: 13px; white-space: nowrap; overflow: hidden; }
.tb.act, .tb.act2 { border-color: #4d5256; color: #eee; font-weight: 700; }
.tb.dim { font-weight: 400; }
.tb.act { width: 248px; margin-right: 6px; }
.tb.act2 { width: 250px; }
.tbi { width: 22px; height: 22px; margin-right: 5px; }
.dim .tbi, .dim3 .tbi { opacity: .6; }
.pager { width: 55px; height: 28px; border: 1px solid #9aa0a4; background: #4c4f52; color: #c8c8c8; font-weight: 700; text-align: center; line-height: 26px; }

.host-status { height: 26px; flex: none; display: flex; align-items: center; justify-content: flex-start; margin-left: -1px; padding-left: 741px; gap: 3px; background: #f0f0f0; border-bottom: 1px solid #333; }
.vi { width: 20px; height: 20px; }
.rctrl { margin-left: 2px; padding-top: 2px; font: 13.3px "Liberation Mono", monospace; color: #222; -webkit-text-stroke: .2px #222; white-space: nowrap; }
.grip { width: 12px; height: 12px; margin-left: auto; margin-right: 1px; margin-top: 12px; }

.annot { position: absolute; left: -1px; top: 0; width: 1073px; height: 829px; z-index: 5; pointer-events: none; }
.mark-text { position: absolute; left: 822px; top: 798px; z-index: 6; font-size: 17px; color: rgba(255,255,255,.6); text-shadow: 0 0 1px rgba(110,110,110,.45); white-space: nowrap; }
```
